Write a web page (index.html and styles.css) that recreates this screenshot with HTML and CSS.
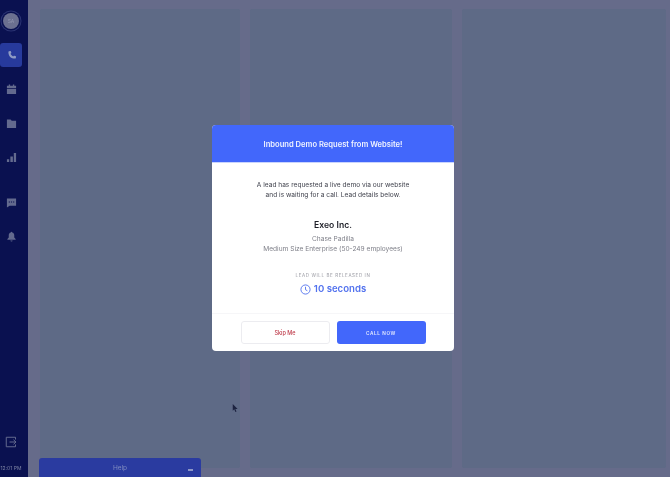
FILE: index.html
```html
<!DOCTYPE html>
<html lang="en">
<head>
<meta charset="utf-8">
<title>Inbound Demo Request</title>
<link rel="stylesheet" href="styles.css">
</head>
<body>
<div class="app">
  <aside class="sidebar">
    <div class="avatar"><span>SA</span></div>
    <nav class="nav">
      <a class="nav-item active"><svg viewBox="0 0 24 24" class="icon"><path d="M6.600 2.500 9.300 2c.5-.1.9.2 1.100.6l1.200 3.100c.2.400 0 .9-.3 1.200L9.700 8.400a12 12 0 0 0 5.900 5.900l1.500-1.600c.3-.3.800-.5 1.200-.3l3.100 1.200c.4.200.7.600.6 1.100l-.5 2.700c-.1.800-.8 1.400-1.600 1.400C10.800 18.800 5.200 13.200 5.200 4.100c0-.8.600-1.500 1.400-1.600z"/></svg></a>
      <a class="nav-item"><svg viewBox="0 0 24 24" class="icon"><path d="M6 1h3v3h6V1h3v3h4v5H2V4h4zM2 11h20v11H2z"/></svg></a>
      <a class="nav-item"><svg viewBox="0 0 24 24" class="icon"><path d="M2 3h8l2.500 3H22v16H2z"/></svg></a>
      <a class="nav-item"><svg viewBox="0 0 24 24" class="icon"><path d="M2 16h5v6H2zM9.500 10H15v12H9.500zM17 2h5v20h-5z"/></svg></a>
    </nav>
    <nav class="nav nav-lower">
      <a class="nav-item"><svg viewBox="0 0 24 24" class="icon"><path fill-rule="evenodd" d="M2 3h20v16H8l-6 4zM6 10v2h2.500v-2zm4.700 0v2h2.600v-2zm4.800 0v2H18v-2z"/></svg></a>
      <a class="nav-item"><svg viewBox="0 0 24 24" class="icon"><path d="M12 1.500c.9 0 1.500.6 1.500 1.500 2.900.7 4.500 3 4.500 6v5l3 3.500V19H3v-1.500L6 14V9c0-3 1.600-5.300 4.500-6 0-.9.600-1.500 1.500-1.500zM9.500 20.500h5a2.500 2.500 0 0 1-5 0z"/></svg></a>
    </nav>
    <div class="sidebar-foot">
      <svg viewBox="0 0 24 24" class="exit"><path d="M21 7V2.500H2.500v19H21V17M9 12h13M17 7.500l5 4.500-5 4.500"/></svg>
      <span class="clock">12:01 PM</span>
    </div>
  </aside>
  <main class="board">
    <section class="column"></section>
    <section class="column"></section>
    <section class="column"></section>
  </main>
  <div class="help"><span class="help-label">Help</span><span class="help-dash"></span></div>
  <svg class="cursor" viewBox="0 0 8 12"><path d="M1 0v9l2-2 1.500 3.500 1.500-.6L4.500 6.500H7.500z"/></svg>
</div>
<div class="modal" role="dialog">
  <header class="modal-head">Inbound Demo Request from Website!</header>
  <div class="modal-body">
    <p class="intro">A lead has requested a live demo via our website<br>and is waiting for a call. Lead details below.</p>
    <h2 class="company">Exeo Inc.</h2>
    <p class="details">Chase Padilla<br>Medium Size Enterprise (50-249 employees)</p>
    <p class="release">LEAD WILL BE RELEASED IN</p>
    <div class="timer">
      <svg viewBox="0 0 24 24" class="timer-icon"><circle cx="12" cy="12" r="10"/><path d="M12 6v6.500l4 2.200"/></svg>
      <span>10 seconds</span>
    </div>
  </div>
  <footer class="modal-foot">
    <button class="btn btn-skip">Skip Me</button>
    <button class="btn btn-call">CALL NOW</button>
  </footer>
</div>
</body>
</html>
```
FILE: styles.css
```css
* { box-sizing: border-box; }
html, body { margin: 0; height: 100%; overflow: hidden; }
body { font-family: Inter, "Liberation Sans", sans-serif; background: #666b8a; }

.app {
  position: relative;
  display: flex;
  width: 670px;
  height: 477px;
  background: #666b8a;
  filter: blur(0.5px);
  overflow: hidden;
}

.sidebar {
  width: 28px;
  flex: none;
  background: #0a1150;
  display: flex;
  flex-direction: column;
  align-items: flex-start;
  padding-top: 12px;
}
.avatar {
  width: 16px;
  height: 16px;
  margin: 1px 0 0 3px;
  border-radius: 50%;
  background: #6b7090;
  box-shadow: 0 0 0 1.500px #0a1150, 0 0 0 2.500px #2b3473;
  display: flex;
  align-items: center;
  justify-content: center;
  font-size: 5px;
  color: #8f94ad;
}
.nav { display: flex; flex-direction: column; gap: 10px; margin-top: 14px; }
.nav-lower { margin-top: 21px; }
.nav-item {
  width: 22px;
  height: 24px;
  display: flex;
  align-items: center;
  justify-content: center;
  border-radius: 0 3px 3px 0;
  color: #636a8e;
}
.nav-item.active { background: #273a9c; color: #8f9cc4; border-radius: 3px; }
.icon { width: 11px; height: 11px; fill: currentColor; }
.sidebar-foot {
  margin-top: auto;
  width: 22px;
  display: flex;
  flex-direction: column;
  align-items: center;
  gap: 17px;
  padding-bottom: 6px;
}
.exit { width: 12px; height: 12px; fill: none; stroke: #636a8e; stroke-width: 2; }
.clock { font-size: 5px; color: #7d84a4; white-space: nowrap; }

.board {
  flex: 1;
  display: grid;
  grid-template-columns: 200px 202px 204px;
  gap: 10px;
  padding: 9px 0 9px 12px;
}
.column { background: #5e6a86; border-radius: 2px; }

.help {
  position: absolute;
  left: 39px;
  top: 458px;
  width: 162px;
  height: 19px;
  background: #2a3ba0;
  border-radius: 3px 3px 0 0;
  display: flex;
  align-items: center;
  justify-content: center;
  color: #7f8bc0;
  font-size: 6.500px;
}
.help-dash {
  position: absolute;
  right: 8px;
  top: 11px;
  width: 5px;
  height: 1.500px;
  background: #8d97c8;
}
.cursor { position: absolute; left: 232px; top: 404px; width: 6px; height: 9px; fill: #1c2340; }

.modal {
  position: absolute;
  left: 212px;
  top: 125px;
  width: 242px;
  height: 226px;
  background: #fff;
  border-radius: 4px;
  display: flex;
  flex-direction: column;
  overflow: hidden;
  text-align: center;
  filter: blur(0.45px);
}
.modal-head {
  height: 38px;
  flex: none;
  padding-top: 1px;
  background: #4267fb;
  color: #f0f3ff;
  font-size: 7.600px;
  font-weight: 600;
  display: flex;
  align-items: center;
  justify-content: center;
  border-bottom: 1px solid #c9d4fd;
}
.modal-body { flex: 1; padding-top: 17px; }
.intro { margin: 0; font-size: 6.600px; line-height: 10px; color: #3d3f4a; }
.company { margin: 19px 0 0; font-size: 8.600px; line-height: 12px; font-weight: 600; color: #1c1d26; }
.details { margin: 4px 0 0; font-size: 6.600px; line-height: 9.500px; color: #7e7f88; }
.release { margin: 19px 0 0; font-size: 4.500px; line-height: 6px; letter-spacing: 0.6px; color: #9a9ba3; }
.timer {
  margin-top: 4px;
  display: flex;
  align-items: center;
  justify-content: center;
  gap: 3px;
  color: #5272ee;
  font-size: 9.600px;
  line-height: 12px;
  font-weight: 600;
}
.timer-icon { width: 11px; height: 11px; fill: none; stroke: currentColor; stroke-width: 2; }
.modal-foot {
  height: 38px;
  flex: none;
  display: flex;
  justify-content: center;
  gap: 7px;
  padding-top: 7px;
  border-top: 1px solid #f6f6f8;
}
.btn {
  width: 89px;
  height: 23px;
  border-radius: 3px;
  font-family: inherit;
  padding: 0;
}
.btn-skip { background: #fff; border: 1px solid #ececf0; color: #c0404f; font-size: 5.500px; font-weight: 500; }
.btn-call { background: #4267fb; border: 0; color: #e3e9ff; font-size: 4.700px; font-weight: 600; letter-spacing: 0.6px; }
```
